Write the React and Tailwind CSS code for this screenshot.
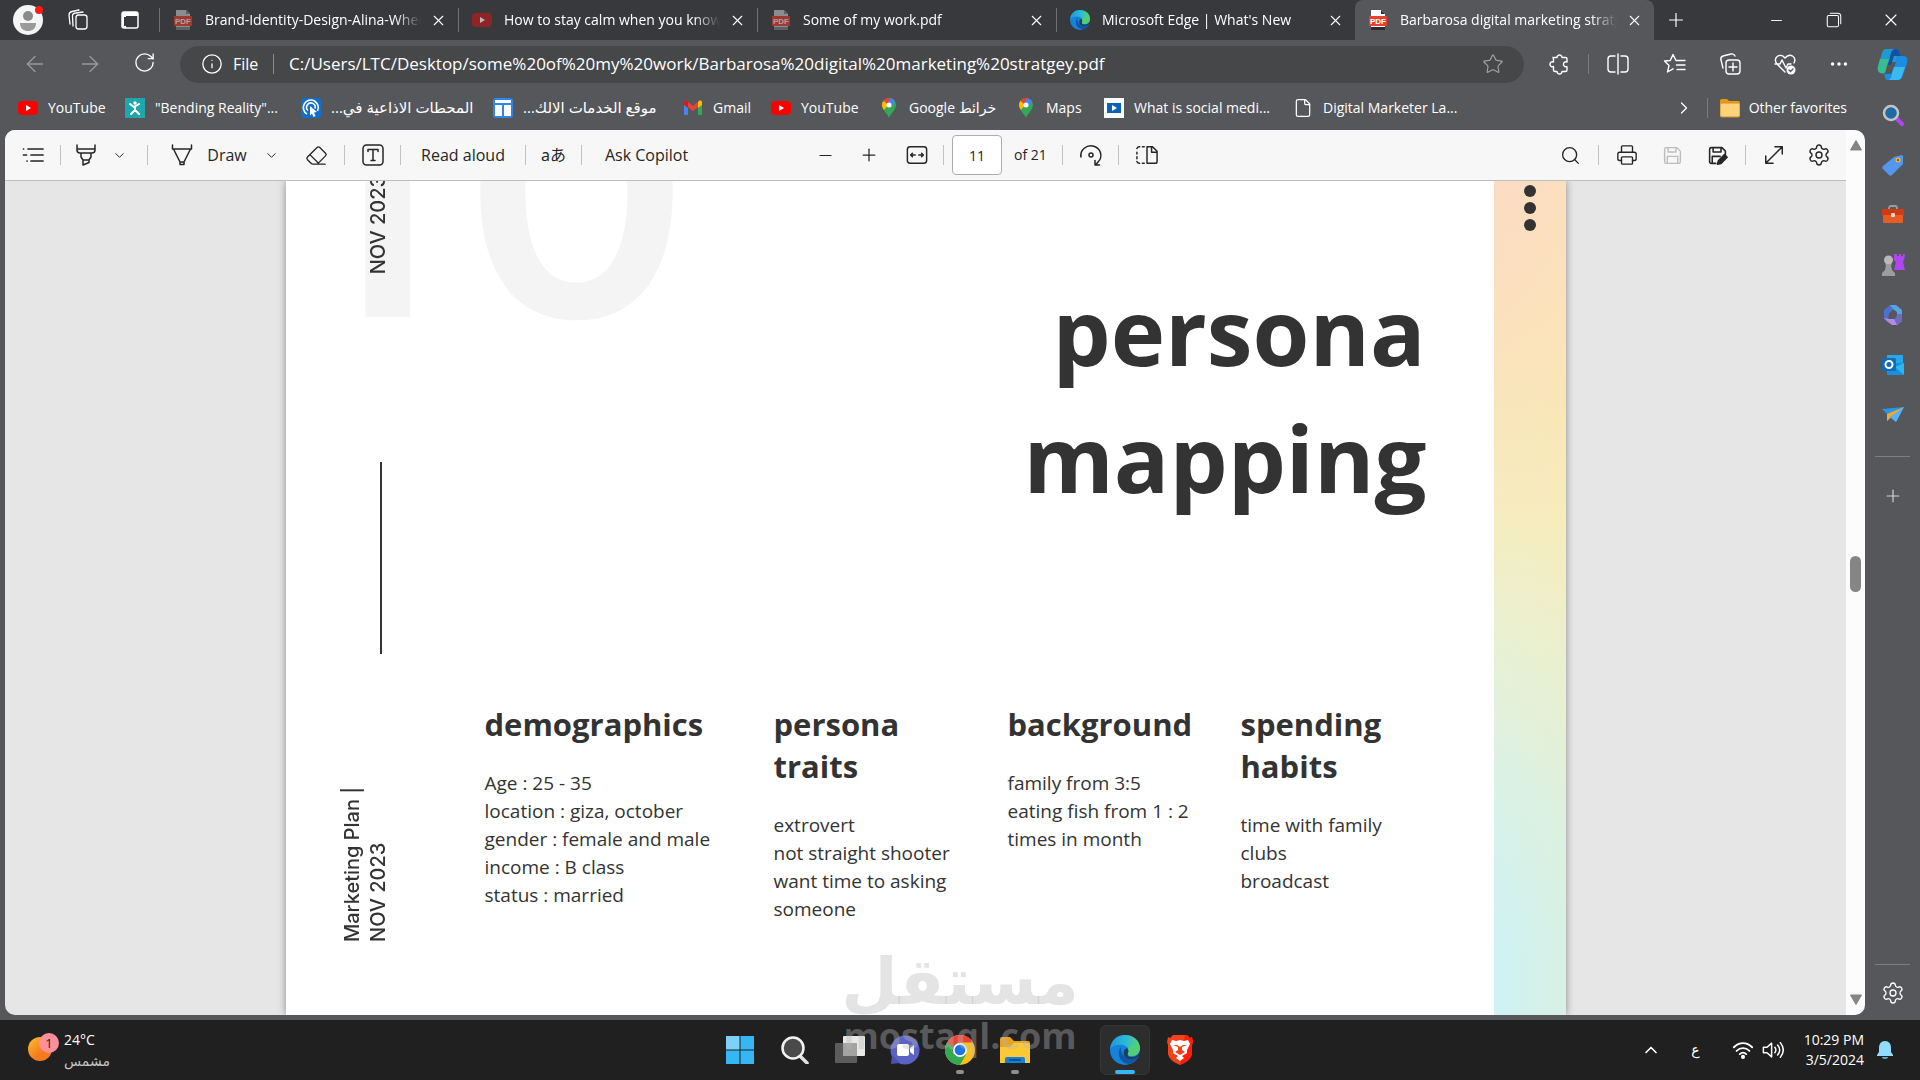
import React from 'react';
import {
    ArrowLeft, ArrowRight, ChevronDown, ChevronRight, ChevronUp, Eraser, File, Info,
    Minus, MoreHorizontal, Plus, Printer, RotateCw, Search, Settings, Star, X
} from 'lucide-react';

const Line = ({ size = 24, width = 1.5, className = '', children }) => (
    <svg
        width={size}
        height={size}
        viewBox="0 0 24 24"
        fill="none"
        stroke="currentColor"
        strokeWidth={width}
        strokeLinecap="round"
        strokeLinejoin="round"
        className={className}
        aria-hidden="true"
    >
        {children}
    </svg>
);

const Art = ({ size = 20, box = 20, children }) => (
    <svg width={size} height={size} viewBox={`0 0 ${box} ${box}`} className="shrink-0" aria-hidden="true">
        {children}
    </svg>
);

const PdfIcon = ({ dim }) => (
    <Art>
        <path d="M3 0h10l4 4v16H3z" fill={dim ? '#8b8c8e' : '#ffffff'} />
        <path d="M3 17h14v3H3zM13 0l4 4h-4z" fill={dim ? '#5f6062' : '#2b2b2b'} />
        <rect x="1" y="6" width="18" height="10" fill={dim ? '#a0382f' : '#e8402f'} />
        <text x="10" y="14" textAnchor="middle" fontSize="8" fontWeight="bold" fontFamily="Liberation Sans, sans-serif" fill={dim ? '#a9a4a3' : '#ffffff'}>PDF</text>
    </Art>
);

const YouTubeIcon = ({ dim }) => (
    <Art>
        <rect x="0" y="3" width="20" height="14" rx="4" fill={dim ? '#8f2426' : '#ff0000'} />
        <path d="M8 7l5 3-5 3z" fill={dim ? '#b9b9b9' : '#ffffff'} />
    </Art>
);

const EdgeIcon = ({ size = 20 }) => (
    <Art size={size} box={30}>
        <defs>
            <linearGradient id="edgeTop" x1="0" y1="0.4" x2="1" y2="0.5">
                <stop offset="0" stopColor="#2196dc" />
                <stop offset="0.5" stopColor="#2ab9d8" />
                <stop offset="1" stopColor="#5bd667" />
            </linearGradient>
        </defs>
        <circle cx="15" cy="15" r="15" fill="#1583dc" />
        <path d="M0 14C1 5 7 0 15 0c9 0 15 6 15 13 0 5-4 8-8 8-3 0-5-1-4-3 2-3 0-7-5-8C7 9 2 11 0 14z" fill="url(#edgeTop)" />
        <path d="M11 12c-5 7-1 16 8 17 4-1 8-4 9-7-7 4-18 1-17-10z" fill="#0f56a5" />
        <path d="M30 14c0 5-4 8-8 8-3 0-5-1-4-3 1-2 1-4-1-6-3 1-4 4-3 7 2 5 11 5 15 1 1-2 2-5 1-7z" fill="#202830" opacity="0.75" />
        <path d="M30 13c0 5-4 8-8 8-3 0-5-1-4-3 1-1 1-2 0-4 4-6 9-5 12-1z" fill="#52cd78" />
    </Art>
);

const MapPin = () => (
    <Art>
        <path d="M10 20C9 16 3 12 3 7a7 7 0 0 1 14 0c0 5-6 9-7 13z" fill="#34a853" />
        <path d="M10 0a7 7 0 0 0-5.500 2.700L8 6l4-5.500A8 8 0 0 0 10 0z" fill="#ea4335" />
        <path d="M12 .3L7.500 5.500 12 9l4-5.300A7 7 0 0 0 12 .3z" fill="#4285f4" />
        <path d="M4.500 2.700C2 6 3 9 5 12l5-6z" fill="#fbbc04" />
        <path d="M4.500 2.700L8 6l2-2-3-3.300z" fill="#ea4335" />
        <circle cx="10" cy="7" r="2.500" fill="#ffffff" />
    </Art>
);

const GmailIcon = () => (
    <Art>
        <path d="M1 4h4v13H2a1 1 0 0 1-1-1z" fill="#4285f4" />
        <path d="M15 4h4v12a1 1 0 0 1-1 1h-3z" fill="#34a853" />
        <path d="M1 6V4c0-1 2-2 3-1l6 5 6-5c1-1 3 0 3 1v2l-9 7z" fill="#ea4335" />
        <path d="M15 4l1-1c1-1 3 0 3 1v3l-4 3z" fill="#fbbc04" />
        <path d="M1 4c0-1 2-2 3-1l1 1v6L1 7z" fill="#c5221f" />
    </Art>
);

const FigureIcon = () => (
    <Art>
        <rect width="20" height="20" fill="#1fa6ad" />
        <g stroke="#ffffff" strokeWidth="2" strokeLinecap="round">
            <path d="M5 6l4 3 5-3M10 9v3l-4 4M10 12l4 4" fill="none" />
        </g>
        <circle cx="10" cy="5" r="1.700" fill="#ffffff" />
    </Art>
);

const RadioIcon = () => (
    <Art>
        <rect width="20" height="20" rx="3" fill="#0f6fc9" />
        <g fill="none" stroke="#ffffff" strokeWidth="1.600">
            <path d="M6 16A7.500 7.500 0 1 1 16.500 13" />
            <path d="M7 12.500A4.300 4.300 0 1 1 14 10.500" />
        </g>
        <path d="M9 8l7 6-3 .5 1.500 3.500-2 1-1.500-3.500L9 17.500z" fill="#ffffff" />
    </Art>
);

const LayoutIcon = () => (
    <Art>
        <rect width="20" height="20" rx="3" fill="#2f86e8" />
        <path d="M2 2h16v3H2zM2 7h7v11H2zM11 7h7v11h-7z" fill="#ffffff" />
    </Art>
);

const PlayBox = () => (
    <Art>
        <rect width="20" height="20" fill="#ffffff" />
        <rect x="3" y="5" width="14" height="10" fill="#0b63b5" />
        <path d="M8 7l5 3-5 3z" fill="#ffffff" />
    </Art>
);

const FolderSmall = () => (
    <Art>
        <path d="M0 3a2 2 0 0 1 2-2h5l2 2h9a2 2 0 0 1 2 2v3H0z" fill="#e69a17" />
        <rect x="0" y="5" width="20" height="14" rx="2" fill="#ffd37a" stroke="#d98a2b" strokeWidth="1" />
    </Art>
);

const tabs = [
    { title: 'Brand-Identity-Design-Alina-Wheeler', icon: <PdfIcon dim /> },
    { title: 'How to stay calm when you know you', icon: <YouTubeIcon dim /> },
    { title: 'Some of my work.pdf', icon: <PdfIcon dim /> },
    { title: "Microsoft Edge | What's New", icon: <EdgeIcon /> },
    { title: 'Barbarosa digital marketing stratgey', icon: <PdfIcon />, active: true }
];

const bookmarks = [
    { label: 'YouTube', icon: <YouTubeIcon />, width: 'w-[107px]' },
    { label: '"Bending Reality"...', icon: <FigureIcon />, width: 'w-[176px]' },
    { label: 'المحطات الاذاعية في...', icon: <RadioIcon />, width: 'w-[192px]', rtl: true },
    { label: 'موقع الخدمات الالك...', icon: <LayoutIcon />, width: 'w-[190px]', rtl: true },
    { label: 'Gmail', icon: <GmailIcon />, width: 'w-[88px]' },
    { label: 'YouTube', icon: <YouTubeIcon />, width: 'w-[108px]' },
    { label: 'Google خرائط', icon: <MapPin />, width: 'w-[137px]' },
    { label: 'Maps', icon: <MapPin />, width: 'w-[88px]' },
    { label: 'What is social medi...', icon: <PlayBox />, width: 'w-[189px]' },
    { label: 'Digital Marketer La...', icon: <File size={20} strokeWidth={1.5} className="shrink-0" />, width: 'w-[180px]' }
];

const personaColumns = [
    {
        title: 'demographics',
        width: 'w-[289px]',
        lines: ['Age : 25 - 35', 'location : giza, october', 'gender : female and male', 'income : B class', 'status : married']
    },
    {
        title: 'persona traits',
        width: 'w-[234px]',
        lines: ['extrovert', 'not straight shooter', 'want time to asking', 'someone']
    },
    {
        title: 'background',
        width: 'w-[233px]',
        lines: ['family from 3:5', 'eating fish from 1 : 2', 'times in month']
    },
    {
        title: 'spending habits',
        width: 'w-[160px]',
        lines: ['time with family', 'clubs', 'broadcast']
    }
];

const TabStrip = () => (
    <header className="flex h-10 shrink-0 items-center bg-[#38393c] text-white">
        <button aria-label="Profile" className="ml-[13px] flex h-[30px] w-[30px] items-center justify-center">
            <Art size={30} box={30}>
                <circle cx="15" cy="15" r="15" fill="#f5f5f5" />
                <circle cx="15" cy="11" r="5" fill="#8a8a8a" />
                <path d="M7 18h16c0 6-4 8-8 8s-8-2-8-8z" fill="#9a9a9a" />
                <circle cx="26" cy="5" r="4" fill="#ff1a1a" />
            </Art>
        </button>
        <button aria-label="Workspaces" className="flex w-[69px] justify-center">
            <Line size={24} width={1.3}>
                <rect x="10" y="7" width="11" height="14" rx="2.500" />
                <path d="M7 18l-.5-10C6.500 6 8 5 10 5l7-1" />
                <path d="M4 16L3 7c0-2 1-3 3-3.500L13 2" />
            </Line>
        </button>
        <button aria-label="Tab actions" className="flex w-[35px] justify-center">
            <Art size={18} box={18}>
                <rect x="1" y="1" width="16" height="16" rx="2" fill="none" stroke="#ffffff" strokeWidth="1.500" />
                <path d="M1 1h16v4H1zM1 5h4v12H1z" fill="#ffffff" />
                <path d="M3 6h2v9H3z" fill="#38393c" />
            </Art>
        </button>
        <nav className="ml-3 flex h-10 flex-1 items-end">
            {tabs.map((tab, i) => (
                <div
                    key={tab.title}
                    className={
                        tab.active
                            ? 'flex h-10 w-[299px] items-center rounded-t-lg bg-[#56575b] pl-[13px] pr-[10px]'
                            : 'flex h-10 w-[299px] items-center pr-[10px]'
                    }
                >
                    {!tab.active && <span className="mr-[13px] h-6 w-px bg-[#6f7073]" />}
                    {tab.icon}
                    <a
                        href={`#tab-${i}`}
                        className="ml-3 mr-[7px] flex-1 overflow-hidden whitespace-nowrap text-sm [mask-image:linear-gradient(to_right,black_88%,transparent)]"
                    >
                        {tab.title}
                    </a>
                    <button aria-label="Close tab" className="flex h-5 w-5 items-center justify-center">
                        <X size={17} strokeWidth={1.5} />
                    </button>
                </div>
            ))}
            <button aria-label="New tab" className="flex h-10 w-[44px] items-center justify-center">
                <Plus size={22} strokeWidth={1.3} />
            </button>
        </nav>
        <button aria-label="Minimize" className="flex h-10 w-[57px] items-center justify-center">
            <Minus size={17} strokeWidth={1.3} />
        </button>
        <button aria-label="Restore" className="flex h-10 w-[57px] items-center justify-center">
            <Line size={18} width={1.4}>
                <rect x="3" y="6" width="15" height="15" rx="2" />
                <path d="M7 3h10a4 4 0 0 1 4 4v10" />
            </Line>
        </button>
        <button aria-label="Close" className="flex h-10 w-[58px] items-center justify-center">
            <X size={20} strokeWidth={1.3} />
        </button>
    </header>
);

const AddressRow = () => (
    <div className="flex h-12 items-center text-white">
        <div className="ml-[7px] flex">
            <button aria-label="Back" className="flex w-[55px] justify-center text-[#98999b]"><ArrowLeft size={26} strokeWidth={1.2} /></button>
            <button aria-label="Forward" className="flex w-[55px] justify-center text-[#98999b]"><ArrowRight size={26} strokeWidth={1.2} /></button>
            <button aria-label="Refresh" className="flex w-[55px] justify-center"><RotateCw size={23} strokeWidth={1.4} /></button>
        </div>
        <div className="ml-2 flex h-[37px] flex-1 items-center rounded-full bg-[#464749] pl-[21px] pr-5">
            <Info size={22} strokeWidth={1.4} />
            <span className="ml-[10px] w-[29px] text-base">File</span>
            <span className="mx-[11px] h-5 w-px bg-[#8a8b8d]" />
            <label htmlFor="address" className="sr-only">Address</label>
            <input
                id="address"
                className="ml-1 min-w-0 flex-1 bg-transparent text-[17px] outline-none"
                defaultValue="C:/Users/LTC/Desktop/some%20of%20my%20work/Barbarosa%20digital%20marketing%20stratgey.pdf"
            />
            <button aria-label="Add to favorites" className="text-[#a0a1a3]"><Star size={22} strokeWidth={1.3} /></button>
        </div>
        <div className="ml-[8px] flex items-center">
            <button aria-label="Extensions" className="flex w-[56px] justify-center">
                <Line width={1.4}>
                    <path d="M5 5.500h4a2.500 2.500 0 1 1 5 0h3.500A1.500 1.500 0 0 1 19 7v3a2.500 2.500 0 1 0 0 4.500V18a1.500 1.500 0 0 1-1.500 1.500H14a2.500 2.500 0 1 1-5 0H7A1.500 1.500 0 0 1 5.500 18v-3.500a2.500 2.500 0 1 1 0-4.500V7z" />
                </Line>
            </button>
            <span className="h-5 w-px bg-[#7b7c7f]" />
            <button aria-label="Split screen" className="flex w-[58px] justify-center">
                <Line width={1.4}><path d="M12 2v20M9 4H5a3 3 0 0 0-3 3v10a3 3 0 0 0 3 3h4M15 4h4a3 3 0 0 1 3 3v10a3 3 0 0 1-3 3h-4" /></Line>
            </button>
            <button aria-label="Favorites" className="flex w-[55px] justify-center">
                <Line width={1.4}><path d="M14 8.500h-1L10 2.500l-2.700 6L1.500 9l4.500 4.500L4.500 20l5.500-3.200M15 8.500h7M13.500 13H22M14 17.500h8" /></Line>
            </button>
            <button aria-label="Collections" className="flex w-[55px] justify-center">
                <Line width={1.4}>
                    <rect x="8" y="8" width="14" height="14" rx="3" />
                    <path d="M15 11v8M11 15h8M5 16l-2-8c-.5-2 .5-3.500 2-4l8-2c2-.4 3.400.5 4 2" />
                </Line>
            </button>
            <button aria-label="Browser essentials" className="flex w-[55px] justify-center">
                <Line width={1.4}>
                    <path d="M12 20l-8-8c-5-6 3-12 8-6 5-6 12-1 9 5M2 12h5l2-4 4 8 2-4h3" />
                    <circle cx="18" cy="18" r="4.500" fill="#ffffff" stroke="none" />
                    <path d="M16 18l1.500 1.500L20 17" stroke="#56575b" />
                </Line>
            </button>
            <button aria-label="Settings and more" className="flex w-[53px] justify-center"><MoreHorizontal size={22} strokeWidth={1.8} /></button>
        </div>
    </div>
);

const BookmarkBar = () => (
    <nav className="flex h-10 items-center pl-[18px] pr-[18px] text-sm text-white">
        {bookmarks.map((item, i) => (
            <a key={i} href={`#bookmark-${i}`} className={`${item.width} flex shrink-0 items-center gap-[10px] whitespace-nowrap`}>
                {item.icon}
                <span dir={item.rtl ? 'rtl' : 'ltr'} className={item.rtl ? 'text-[15px]' : 'text-sm'}>{item.label}</span>
            </a>
        ))}
        <span className="flex-1" />
        <button aria-label="More favorites" className="mr-[13px]"><ChevronRight size={20} strokeWidth={1.5} /></button>
        <span className="mr-3 h-5 w-px bg-[#7b7c7f]" />
        <a href="#other" className="flex items-center gap-[9px] whitespace-nowrap">
            <FolderSmall />
            Other favorites
        </a>
    </nav>
);

const Divider = () => <span className="h-5 w-px shrink-0 bg-[#c2c2c2]" />;

const PdfToolbar = () => (
    <div className="flex h-[51px] shrink-0 items-center border-b border-[#bdbdbd] bg-[#f7f7f7] text-base text-[#262626]">
        <div className="flex w-[798px] shrink-0 items-center">
            <button aria-label="Contents" className="flex w-[55px] justify-center">
                <Line width={1.7}><path d="M7 6h15M10 12h12M10 18h12M2.500 6h.1M2.500 12h3M6 18h.1" /></Line>
            </button>
            <Divider />
            <button aria-label="Highlight" className="flex w-[50px] justify-center">
                <Line width={1.5}><path d="M3 2v5c0 2 1 3 3 3h12c2 0 3-1 3-3V2M3 6h18M7 10v4l2 3h6l2-3v-4M9 17v5l6-2.500V17" /></Line>
            </button>
            <button aria-label="Highlight options" className="flex w-4 justify-center"><ChevronDown size={15} strokeWidth={1.5} /></button>
            <span className="w-5" />
            <Divider />
            <button className="ml-[9px] flex items-center">
                <span className="flex w-[50px] justify-center">
                    <Line width={1.5}><path d="M2.500 2v4h19V2M3.500 6L10 19v2.500h4V19l6.500-13M10 19h4" /></Line>
                </span>
                <span className="w-[40px]">Draw</span>
            </button>
            <button aria-label="Draw options" className="ml-4 flex w-4 justify-center"><ChevronDown size={15} strokeWidth={1.5} /></button>
            <button aria-label="Erase" className="ml-[9px] flex w-14 justify-center"><Eraser size={23} strokeWidth={1.4} /></button>
            <Divider />
            <button aria-label="Add text" className="flex w-[55px] justify-center">
                <Line width={1.5}><rect x="2" y="2" width="20" height="20" rx="3.500" /><path d="M7 8.500V6.500h10v2M12 6.500v11M10 17.500h4" /></Line>
            </button>
            <Divider />
            <button className="w-[124px] whitespace-nowrap">Read aloud</button>
            <Divider />
            <button aria-label="Translate" className="w-[55px] whitespace-nowrap font-['Noto_Sans','Noto_Sans_CJK_JP',sans-serif]">aあ</button>
            <Divider />
            <button className="w-[129px] whitespace-nowrap">Ask Copilot</button>
        </div>
        <div className="flex shrink-0 items-center">
            <button aria-label="Zoom out" className="flex w-[44px] justify-center"><Minus size={19} strokeWidth={1.5} /></button>
            <button aria-label="Zoom in" className="flex w-[44px] justify-center"><Plus size={20} strokeWidth={1.5} /></button>
            <button aria-label="Fit to width" className="flex w-[52px] justify-center">
                <Line size={22} width={1.6}><rect x="1.500" y="3" width="21" height="18" rx="3" /><path d="M10 12H5M7 10l-2 2 2 2M14 12h5M17 10l2 2-2 2" /></Line>
            </button>
            <Divider />
            <label htmlFor="page" className="sr-only">Page</label>
            <input
                id="page"
                defaultValue="11"
                className="ml-2 h-10 w-[50px] rounded-sm border border-[#adadad] bg-white text-center text-sm outline-none"
            />
            <span className="ml-3 w-[48px] whitespace-nowrap text-sm">of 21</span>
            <Divider />
            <button aria-label="Rotate" className="flex w-[55px] justify-center">
                <Line width={1.5}><path d="M2 14A10 9.500 0 1 1 19 19l-2 2.500M16 17.500v4.500h4.500" /><circle cx="12" cy="12" r="2" /></Line>
            </button>
            <Divider />
            <button aria-label="Page view" className="flex w-[56px] justify-center">
                <Line size={22} width={1.6}><path d="M12 3h6l5 5v11a2 2 0 0 1-2 2h-9zM17 3v6h6M9 3H7M4 3a3 3 0 0 0-3 2M1 9v2M1 14v2M1 19a3 3 0 0 0 3 2M7 21h2" /></Line>
            </button>
        </div>
        <span className="flex-1" />
        <div className="flex shrink-0 items-center pr-[9px]">
            <button aria-label="Find" className="flex w-[55px] justify-center"><Search size={21} strokeWidth={1.5} /></button>
            <Divider />
            <button aria-label="Print" className="flex w-[55px] justify-center"><Printer size={22} strokeWidth={1.5} /></button>
            <button aria-label="Save" className="flex w-[36px] justify-center text-[#bdbdbd]">
                <Line size={21} width={1.6}><path d="M5 3h12l4 4v12a2 2 0 0 1-2 2H5a2 2 0 0 1-2-2V5a2 2 0 0 1 2-2zM7 3v5h9V3M6 21v-8h12v8" /></Line>
            </button>
            <button aria-label="Save as" className="flex w-[55px] justify-center">
                <Line size={21} width={1.8}>
                    <path d="M10 21H5a2 2 0 0 1-2-2V5a2 2 0 0 1 2-2h12l4 4v4M7 3v5h9V3M6 21v-8h9" />
                    <path d="M12 22l1-4 7-7 3 3-7 7z" fill="currentColor" />
                </Line>
            </button>
            <Divider />
            <button aria-label="Full screen" className="flex w-[55px] justify-center">
                <Line size={22} width={1.6}><path d="M3 21L21 3M13 3h8v8M3 13v8h8" /></Line>
            </button>
            <button aria-label="Settings" className="flex w-[36px] justify-center"><Settings size={24} strokeWidth={1.4} /></button>
        </div>
    </div>
);

const SlidePage = () => (
    <article className="relative mx-auto flex w-full max-w-[1280px] bg-white font-['Open_Sans',sans-serif] text-[#333333] shadow-[0_0_8px_rgba(0,0,0,0.4)]">
        <div aria-hidden="true" className="absolute bottom-[651px] left-0 flex gap-7 pl-1 font-['Inter',sans-serif] text-[344px] font-semibold leading-none text-[#f4f4f4]">
            <span>1</span>
            <span>0</span>
        </div>

        <aside className="relative flex w-[199px] shrink-0 flex-col items-end pr-[94px] font-['Inter',sans-serif] text-xl font-medium leading-[26px]">
            <div className="flex h-[93px] items-end overflow-hidden">
                <p className="rotate-180 whitespace-nowrap [writing-mode:vertical-rl]">NOV 2023</p>
            </div>
            <div className="mr-[9px] mt-[188px] h-[192px] w-[2px] bg-[#333333]" />
            <p className="mt-[131px] h-[157px] rotate-180 whitespace-nowrap [writing-mode:vertical-rl]">
                Marketing Plan |<br />NOV 2023
            </p>
        </aside>

        <div className="relative flex min-w-0 flex-1 flex-col">
            <h1 className="ml-auto mt-[86px] w-[470px] pr-[68px] text-right text-[92px] font-bold leading-[127px]">
                persona mapping
            </h1>
            <section className="mt-[182px] flex">
                {personaColumns.map(col => (
                    <div key={col.title} className={`${col.width} pr-5`}>
                        <h2 className="text-[31px] font-bold leading-[42px]">{col.title}</h2>
                        <ul className="mt-6 whitespace-nowrap text-[19px] leading-7">
                            {col.lines.map(line => <li key={line}>{line}</li>)}
                        </ul>
                    </div>
                ))}
            </section>
        </div>

        <div className="relative flex w-[72px] shrink-0 flex-col items-center gap-[5px] self-stretch bg-[linear-gradient(to_right,transparent,rgba(250,236,170,0.2)),linear-gradient(to_bottom,#fbdcc4_0%,#fbdfbf_14%,#f9e6bb_28%,#f6ecc0_40%,#ebf0d0_52%,#e0f1df_65%,#d5f2ec_78%,#cff2f4_92%)] pt-1">
            <span className="h-3 w-3 rounded-full bg-[#333333]" />
            <span className="h-3 w-3 rounded-full bg-[#333333]" />
            <span className="h-3 w-3 rounded-full bg-[#333333]" />
        </div>
    </article>
);

const Scrollbar = () => (
    <div className="flex w-[19px] shrink-0 flex-col items-center bg-[#fcfcfc] py-[9px]">
        <Art size={12} box={12}><path d="M6 1.500L11.500 11H.5z" fill="#858585" stroke="#858585" strokeLinejoin="round" /></Art>
        <span className="mt-[405px] h-9 w-[11px] rounded-full bg-[#858585]" />
        <span className="flex-1" />
        <Art size={12} box={12}><path d="M6 10.500L.5 1h11z" fill="#858585" stroke="#858585" strokeLinejoin="round" /></Art>
    </div>
);

const sideApps = [
    {
        name: 'Search',
        art: (
            <Art size={22} box={22}>
                <path d="M14 14l6 6" stroke="#b146f0" strokeWidth="4" strokeLinecap="round" />
                <circle cx="9" cy="9" r="7" fill="#1d6aa5" stroke="#c4c4c4" strokeWidth="2.500" />
            </Art>
        )
    },
    {
        name: 'Shopping',
        art: (
            <Art size={22} box={22}>
                <path d="M12 3l8-2 1 1v8L10 21c-1 1-2 1-3 0l-6-6c-1-1-1-2 0-3z" fill="#5596ee" />
                <circle cx="16" cy="6" r="2.500" fill="#f4b324" />
                <circle cx="16" cy="6" r="1" fill="#5c3a10" />
            </Art>
        )
    },
    {
        name: 'Tools',
        art: (
            <Art size={22} box={22}>
                <path d="M7 6V4c0-1 1-2 2-2h4c1 0 2 1 2 2v2" fill="none" stroke="#9d9d9d" strokeWidth="1.800" />
                <rect x="0" y="5" width="22" height="7" rx="1" fill="#d13b14" />
                <rect x="1" y="11" width="20" height="8" rx="1" fill="#ea5a23" />
                <rect x="9" y="9" width="4" height="4" rx="1" fill="#dcdcdc" />
            </Art>
        )
    },
    {
        name: 'Games',
        art: (
            <Art size={24} box={24}>
                <path d="M13 1h3v2h2V1h2v2h2V1h2l-1 6-1 2 2 8H13l2-8-2-2z" fill="#b146f0" />
                <circle cx="7.500" cy="7" r="4.500" fill="#b9b9b9" />
                <path d="M4 11h7l-1 1 1 5 3 3v3H1v-3l3-3 1-5z" fill="#9d9d9d" />
            </Art>
        )
    },
    {
        name: 'Microsoft 365',
        art: (
            <Art size={22} box={22}>
                <path d="M8 1h6l6 5v6h-5V8l-4-3-4 4z" fill="#56a3ea" />
                <path d="M8 1L2 6v9l4 3 1-9 4-4z" fill="#4e6fd0" />
                <path d="M2 14l4 4 4 3h5l5-4v-6h-4l-4 4H7z" fill="#b28be6" />
                <path d="M20 10v7l-5 4-3-6 4-5z" fill="#6d6cc4" />
                <path d="M9 8h4l2 3-2 4H9l-2-4z" fill="#56575b" />
            </Art>
        )
    },
    {
        name: 'Outlook',
        art: (
            <Art size={22} box={22}>
                <rect x="5" y="1" width="16" height="12" fill="#28a8ea" />
                <rect x="5" y="9" width="17" height="12" rx="1" fill="#1b8fdc" />
                <path d="M13 13l9-4v12z" fill="#2ab8f0" />
                <rect x="0" y="4" width="14" height="13" rx="1.500" fill="#0f6cbd" />
                <circle cx="7" cy="10.500" r="3.500" fill="none" stroke="#ffffff" strokeWidth="2" />
            </Art>
        )
    },
    {
        name: 'Drop',
        art: (
            <Art size={22} box={22}>
                <path d="M0 5l22-2-8 15-5-4-4 3 0-7z" fill="#2795e8" />
                <path d="M22 3L5 10v7l3-3z" fill="#f4a92c" />
                <path d="M22 3L8 13l6 5z" fill="#54b4f6" />
            </Art>
        )
    }
];

const Sidebar = () => (
    <aside className="flex w-[55px] shrink-0 flex-col items-center text-[#d5d5d5]">
        <button aria-label="Copilot" className="mt-2 flex h-8 items-center">
            <Art size={31} box={31}>
                <path d="M9 0h10c2 0 3 1 3 3l-3 10H9l-3 12C1 24 0 21 1 17L5 4c1-3 2-4 4-4z" fill="#1d9bd0" />
                <path d="M3 10h9l-4 14c-5 1-8-1-7-6z" fill="#38bd91" />
                <path d="M19 0c2 0 3 1 3 3l2 4h-7l-3 9-3 0 3-12c1-3 2-4 5-4z" fill="#1250a4" />
                <path d="M21 7h5c4 0 5 3 4 7l-4 12c-1 4-3 5-5 5H11c-2 0-3-1-3-3l-1-3h5c2 0 3-1 4-3z" fill="#1b8ee2" />
                <path d="M17 18h11l-3 9c-1 3-3 4-5 4h-9c4 0 3-5 6-13z" fill="#39baf3" />
            </Art>
        </button>
        <div className="mt-[10px] flex flex-col">
            {sideApps.map(app => (
                <button key={app.name} aria-label={app.name} className="flex h-[50px] w-[55px] items-center justify-center">
                    {app.art}
                </button>
            ))}
        </div>
        <span className="mt-4 h-px w-[35px] bg-[#7d7e81]" />
        <button aria-label="Customize" className="mt-[29px]"><Plus size={20} strokeWidth={1.4} /></button>
        <span className="flex-1" />
        <span className="h-px w-[35px] bg-[#7d7e81]" />
        <button aria-label="Sidebar settings" className="mb-[15px] mt-[16px] text-white"><Settings size={24} strokeWidth={1.3} /></button>
    </aside>
);

const taskApps = [
    {
        name: 'Start',
        art: (
            <Art size={30} box={30}>
                <path d="M1 1h13.500v13.500H1z" fill="#7dd0f8" />
                <path d="M15.500 1H29v13.500H15.500zM1 15.500h13.500V29H1zM15.500 15.500H29V29H15.500z" fill="#36b7f3" />
            </Art>
        )
    },
    {
        name: 'Search',
        art: (
            <Art size={28} box={28}>
                <path d="M19 20l7 7" stroke="#e2e2e2" strokeWidth="3.500" strokeLinecap="round" />
                <circle cx="12" cy="12" r="10.500" fill="#4a4a4a" stroke="#f3f3f3" strokeWidth="2.500" />
            </Art>
        )
    },
    {
        name: 'Task view',
        art: (
            <Art size={30} box={30}>
                <rect x="8" y="1" width="22" height="20" rx="1" fill="#e8e8e8" />
                <rect x="0" y="8" width="22" height="20" rx="1" fill="#5c5c5c" />
                <rect x="8" y="8" width="14" height="13" fill="#a3a3a3" />
            </Art>
        )
    },
    {
        name: 'Chat',
        art: (
            <Art size={30} box={30}>
                <circle cx="15" cy="15" r="14.500" fill="#5b62c4" />
                <path d="M1 29l1-9 8 8z" fill="#4a53b4" />
                <rect x="7" y="9" width="12" height="12" rx="2" fill="#ffffff" />
                <path d="M20 13l4-3v10l-4-3z" fill="#ffffff" />
            </Art>
        )
    },
    {
        name: 'Chrome',
        running: true,
        art: (
            <Art size={30} box={30}>
                <circle cx="15" cy="15" r="15" fill="#fbc116" />
                <path d="M2 7.500A15 15 0 0 0 15 30l6.500-11.200L8.500 18.700z" fill="#34a853" />
                <path d="M2 7.500l6.500 11.300L15 7.500z" fill="#34a853" />
                <path d="M2 7.500A15 15 0 0 1 28 7.500H15a7.500 7.500 0 0 0-7 5z" fill="#ea4335" />
                <circle cx="15" cy="15" r="7" fill="#ffffff" />
                <circle cx="15" cy="15" r="5.300" fill="#1a73e8" />
            </Art>
        )
    },
    {
        name: 'File Explorer',
        running: true,
        art: (
            <Art size={30} box={30}>
                <path d="M0 4a2 2 0 0 1 2-2h8l4 4h14a2 2 0 0 1 2 2v4H0z" fill="#e8a317" />
                <path d="M0 12h10l4-4h14a2 2 0 0 1 2 2v18H0z" fill="#fcc934" />
                <path d="M5 24a2 2 0 0 1 2-2h16a2 2 0 0 1 2 2v4H5z" fill="#1480d8" />
                <path d="M10 25h10" stroke="#0b5394" strokeWidth="2" strokeLinecap="round" />
            </Art>
        )
    },
    { name: '', art: null },
    { name: 'Microsoft Edge', active: true, art: <EdgeIcon size={30} /> },
    {
        name: 'Brave',
        art: (
            <Art size={30} box={30}>
                <path d="M8 0h14l3 3 2-1 1 5-1 3 0 9c-1 4-3 6-6 8l-6 3-6-3c-3-2-5-4-6-8L3 10 2 7l1-5 2 1z" fill="#f4401b" />
                <path d="M20 0h2l3 3 2-1 1 5-1 3 0 9c-1 4-3 6-6 8l-6 3z" fill="#ff1d0c" />
                <path d="M7 5l4 1 4-1 4 1 4-1 2 4-3 6 0 3-5 3 2 2-4 3-4-3 2-2-5-3V15L5 9z" fill="#ffffff" />
                <path d="M8 10l5 2v3l-3 2 5 3 5-3-3-2v-3l5-2-4 0-3 2-3-2z" fill="#f4401b" />
            </Art>
        )
    }
];

const Taskbar = () => (
    <footer className="grid h-[60px] shrink-0 grid-cols-[1fr_495px_1fr] items-center bg-[#202020] text-white">
        <button className="flex items-center justify-self-start pl-[26px] text-left">
            <Art size={34} box={34}>
                <defs>
                    <linearGradient id="sun" x1="0" y1="0" x2="1" y2="1">
                        <stop offset="0" stopColor="#f9c22e" />
                        <stop offset="0.6" stopColor="#f47a1c" />
                    </linearGradient>
                </defs>
                <circle cx="14" cy="16" r="12" fill="url(#sun)" />
                <circle cx="23" cy="10" r="10" fill="#fc8f99" />
                <text x="23" y="15" textAnchor="middle" fontSize="13" fontFamily="Open Sans, sans-serif" fill="#3a1518">1</text>
            </Art>
            <span className="ml-1 flex flex-col text-sm leading-[22px]">
                <span>24°C</span>
                <span className="text-sm leading-5 text-[#c4c4c4]" dir="rtl">مشمس</span>
            </span>
        </button>
        <div className="flex">
            {taskApps.map((app, i) =>
                app.art ? (
                    <button key={i} aria-label={app.name} className="relative flex h-[60px] w-[55px] items-center justify-center">
                        <span className={app.active ? 'flex h-[50px] w-[50px] items-center justify-center rounded-md border border-[#353535] bg-[#2d2d2d]' : 'flex'}>
                            {app.art}
                        </span>
                        {app.running && <span className="absolute bottom-[6px] h-1 w-2 rounded-full bg-[#8f8f8f]" />}
                        {app.active && <span className="absolute bottom-[6px] h-1 w-5 rounded-full bg-[#3ab6f2]" />}
                    </button>
                ) : (
                    <span key={i} className="w-[55px]" />
                )
            )}
        </div>
        <div className="flex items-center justify-self-end pr-[26px]">
            <button aria-label="Show hidden icons" className="mr-[30px]"><ChevronUp size={20} strokeWidth={2} /></button>
            <span className="mr-8 text-sm">ع</span>
            <button aria-label="Network and sound" className="mr-5 flex items-center gap-2">
                <Line size={22} width={2}><path d="M2 9c6-6 14-6 20 0M5 13c4-4 10-4 14 0M8.500 16.500c2-2 5-2 7 0" /><circle cx="12" cy="19.500" r="1.200" fill="currentColor" /></Line>
                <Line size={22} width={1.600}><path d="M1.500 9v6h4l5 4.500v-15L5.500 9zM14 9c1.500 2 1.500 4 0 6M17 6.500c3 3.500 3 7.500 0 11M20 4c4 5 4 11 0 16" /></Line>
            </button>
            <span className="flex flex-col text-right text-sm leading-5">
                <span>10:29 PM</span>
                <span>3/5/2024</span>
            </span>
            <button aria-label="Notifications" className="ml-3">
                <Art size={18} box={18}>
                    <path d="M9 0c4 0 6 3 6 7v4l2 3v1H1v-1l2-3V7c0-4 2-7 6-7z" fill="#8fdcff" />
                    <path d="M6 16h6c0 1-1 2-3 2s-3-1-3-2z" fill="#5aa9d6" />
                </Art>
            </button>
        </div>
    </footer>
);

const Watermark = () => (
    <div
        className="pointer-events-none absolute inset-x-0 bottom-0 flex flex-col items-center font-bold text-[rgba(184,184,184,0.38)]"
        aria-hidden="true"
    >
        <span dir="rtl" className="font-['DejaVu_Sans',sans-serif] text-[65px] leading-[72px]">مستقل</span>
        <span className="h-[62px] font-['Open_Sans',sans-serif] text-[36px] leading-[36px]">mostaql.com</span>
    </div>
);

const App = () => (
    <div className="relative flex h-screen flex-col overflow-hidden bg-[#56575b] font-['Open_Sans','DejaVu_Sans',sans-serif]">
        <TabStrip />
        <div className="flex min-h-0 flex-1">
            <div className="flex min-w-0 flex-1 flex-col">
                <AddressRow />
                <BookmarkBar />
                <main className="mb-[5px] ml-[5px] mt-[2px] flex min-h-0 flex-1 overflow-hidden rounded-[10px]">
                    <div className="flex min-w-0 flex-1 flex-col bg-[#e6e6e6]">
                        <PdfToolbar />
                        <div className="flex min-h-0 flex-1 overflow-hidden">
                            <SlidePage />
                        </div>
                    </div>
                    <Scrollbar />
                </main>
            </div>
            <Sidebar />
        </div>
        <Taskbar />
        <Watermark />
    </div>
);

export default App;
